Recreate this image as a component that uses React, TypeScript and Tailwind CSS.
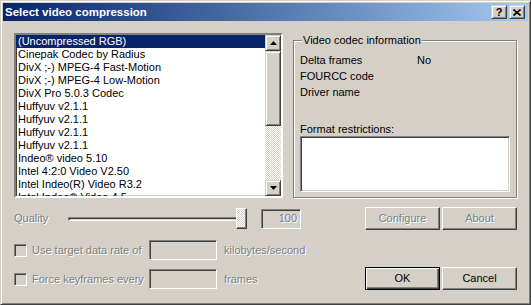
import React from 'react';

const raised =
  'border border-t-[#d4d0c8] border-l-[#d4d0c8] border-r-[#404040] border-b-[#404040] shadow-[inset_1px_1px_#fff,inset_-1px_-1px_#808080]';
const button =
  'border border-t-white border-l-white border-r-[#404040] border-b-[#404040] shadow-[inset_-1px_-1px_#808080]';
const sunken =
  'border border-t-[#808080] border-l-[#808080] border-r-white border-b-white shadow-[inset_1px_1px_#404040,inset_-1px_-1px_#d4d0c8]';
const disabled = 'text-[#808080] [text-shadow:1px_1px_0_#fff]';

const codecs = [
  '(Uncompressed RGB)',
  'Cinepak Codec by Radius',
  'DivX ;-) MPEG-4 Fast-Motion',
  'DivX ;-) MPEG-4 Low-Motion',
  'DivX Pro 5.0.3 Codec',
  'Huffyuv v2.1.1',
  'Huffyuv v2.1.1',
  'Huffyuv v2.1.1',
  'Huffyuv v2.1.1',
  'Indeo® video 5.10',
  'Intel 4:2:0 Video V2.50',
  'Intel Indeo(R) Video R3.2',
  'Intel Indeo® Video 4.5',
];

function Arrow({ up }: { up?: boolean }) {
  return (
    <svg width="7" height="4" viewBox="0 0 7 4">
      <polygon points={up ? '3.5,0 7,4 0,4' : '0,0 7,0 3.5,4'} fill="#000" />
    </svg>
  );
}

function Checkbox({ label }: { label: string }) {
  return (
    <div className="flex items-center w-[135px]">
      <div className={`w-[13px] h-[13px] bg-[#d4d0c8] ${sunken}`} />
      <span className={`ml-[5px] ${disabled}`}>{label}</span>
    </div>
  );
}

export default function App() {
  return (
    <div className="w-[531px] h-[305px] bg-[#d4d0c8] border border-t-[#d4d0c8] border-l-[#d4d0c8] border-r-[#404040] border-b-[#404040] shadow-[inset_1px_1px_#fff,inset_-1px_-1px_#808080] p-[2px] font-['Liberation_Sans',Arial,sans-serif] text-[11px] leading-[13px] text-black">
      {/* title bar */}
      <div className="h-[18px] flex items-center bg-linear-to-r from-[#0a246a] to-[#a6caf0] pl-[2px] pr-[3px]">
        <span className="font-bold text-white text-[11.5px]">Select video compression</span>
        <div className="ml-auto flex gap-[2px]">
          <div className={`w-[16px] h-[14px] bg-[#d4d0c8] ${raised} flex items-center justify-center font-bold text-[11px] leading-none`}>
            ?
          </div>
          <div className={`w-[16px] h-[14px] bg-[#d4d0c8] ${raised} flex items-center justify-center`}>
            <svg width="8" height="7" viewBox="0 0 8 7">
              <path d="M0.5 0.5L7.5 6.5M7.5 0.5L0.5 6.5" stroke="#000" strokeWidth="1.6" />
            </svg>
          </div>
        </div>
      </div>

      <div className="px-[11px] pt-[12px]">
        <div className="flex">
          {/* codec list */}
          <div className={`w-[269px] h-[165px] bg-white flex border-2 border-t-[#808080] border-l-[#808080] border-r-white border-b-white shadow-[inset_1px_1px_#404040,inset_-1px_-1px_#d4d0c8] p-0`}>
            <div className="flex-1 overflow-hidden">
              {codecs.map((c, i) => (
                <div
                  key={i}
                  className={`h-[13px] pl-[2px] whitespace-nowrap ${i === 0 ? 'bg-[#0a246a] text-white' : ''}`}
                >
                  {c}
                </div>
              ))}
            </div>
            <div className="w-[16px] flex flex-col">
              <div className={`h-[16px] bg-[#d4d0c8] ${raised} flex items-center justify-center`}>
                <Arrow up />
              </div>
              <div className={`h-[75px] bg-[#d4d0c8] ${raised}`} />
              <div className="flex-1 bg-[repeating-conic-gradient(#ffffff_0%_25%,#d4d0c8_0%_50%)] bg-[length:2px_2px]" />
              <div className={`h-[16px] bg-[#d4d0c8] ${raised} flex items-center justify-center`}>
                <Arrow />
              </div>
            </div>
          </div>

          {/* info group */}
          <div className="relative ml-[10px] mt-[7px] w-[224px] h-[158px] border border-[#808080] shadow-[inset_1px_1px_#fff,1px_1px_#fff] pl-[6px] pt-[11px]">
            <span className="absolute left-[8px] top-[-7px] bg-[#d4d0c8] px-[1px]">Video codec information</span>
            <div className="flex leading-[16px]">
              <span className="w-[117px]">Delta frames</span>
              <span>No</span>
            </div>
            <div className="leading-[16px]">FOURCC code</div>
            <div className="leading-[16px]">Driver name</div>
            <div className="mt-[23px]">Format restrictions:</div>
            <div className={`w-[210px] h-[56px] bg-white ${sunken}`} />
          </div>
        </div>

        {/* quality row */}
        <div className="mt-[9px] h-[23px] flex items-center">
          <span className={`w-[54px] ${disabled}`}>Quality</span>
          <div className="relative w-[179px] h-[23px] flex items-center">
            <div className="w-[176px] h-[4px] border border-t-[#808080] border-l-[#808080] border-r-white border-b-white bg-[#d4d0c8] shadow-[inset_1px_1px_#404040]" />
            <div className={`absolute left-[168px] top-[1px] w-[11px] h-[21px] border border-t-white border-l-white border-r-[#404040] border-b-[#404040] shadow-[inset_-1px_-1px_#808080] bg-[repeating-conic-gradient(#ffffff_0%_25%,#d4d0c8_0%_50%)] bg-[length:2px_2px]`} />
          </div>
          <div className={`ml-[14px] w-[40px] h-[20px] bg-[#d4d0c8] ${sunken} flex items-center justify-end pr-[3px] ${disabled}`}>
            100
          </div>
          <div className="ml-auto flex gap-[2px]">
            <div className={`w-[75px] h-[23px] bg-[#d4d0c8] ${button} flex items-center justify-center ${disabled}`}>
              Configure
            </div>
            <div className={`w-[75px] h-[23px] bg-[#d4d0c8] ${button} flex items-center justify-center ${disabled}`}>
              About
            </div>
          </div>
        </div>

        {/* options + ok/cancel */}
        <div className="mt-[10px] flex">
          <div className="flex flex-col gap-[9px]">
            <div className="flex items-center h-[20px]">
              <Checkbox label="Use target data rate of" />
              <div className={`w-[68px] h-[20px] bg-[#d4d0c8] ${sunken}`} />
              <span className={`ml-[7px] ${disabled}`}>kilobytes/second</span>
            </div>
            <div className="flex items-center h-[20px]">
              <Checkbox label="Force keyframes every" />
              <div className={`w-[68px] h-[20px] bg-[#d4d0c8] ${sunken}`} />
              <span className={`ml-[7px] ${disabled}`}>frames</span>
            </div>
          </div>
          <div className="ml-auto mt-[27px] flex gap-[2px]">
            <div className="w-[75px] h-[23px] bg-[#d4d0c8] border border-black shadow-[inset_1px_1px_#fff,inset_-1px_-1px_#404040,inset_-2px_-2px_#808080] flex items-center justify-center">
              OK
            </div>
            <div className={`w-[75px] h-[23px] bg-[#d4d0c8] ${button} flex items-center justify-center`}>
              Cancel
            </div>
          </div>
        </div>
      </div>
    </div>
  );
}
